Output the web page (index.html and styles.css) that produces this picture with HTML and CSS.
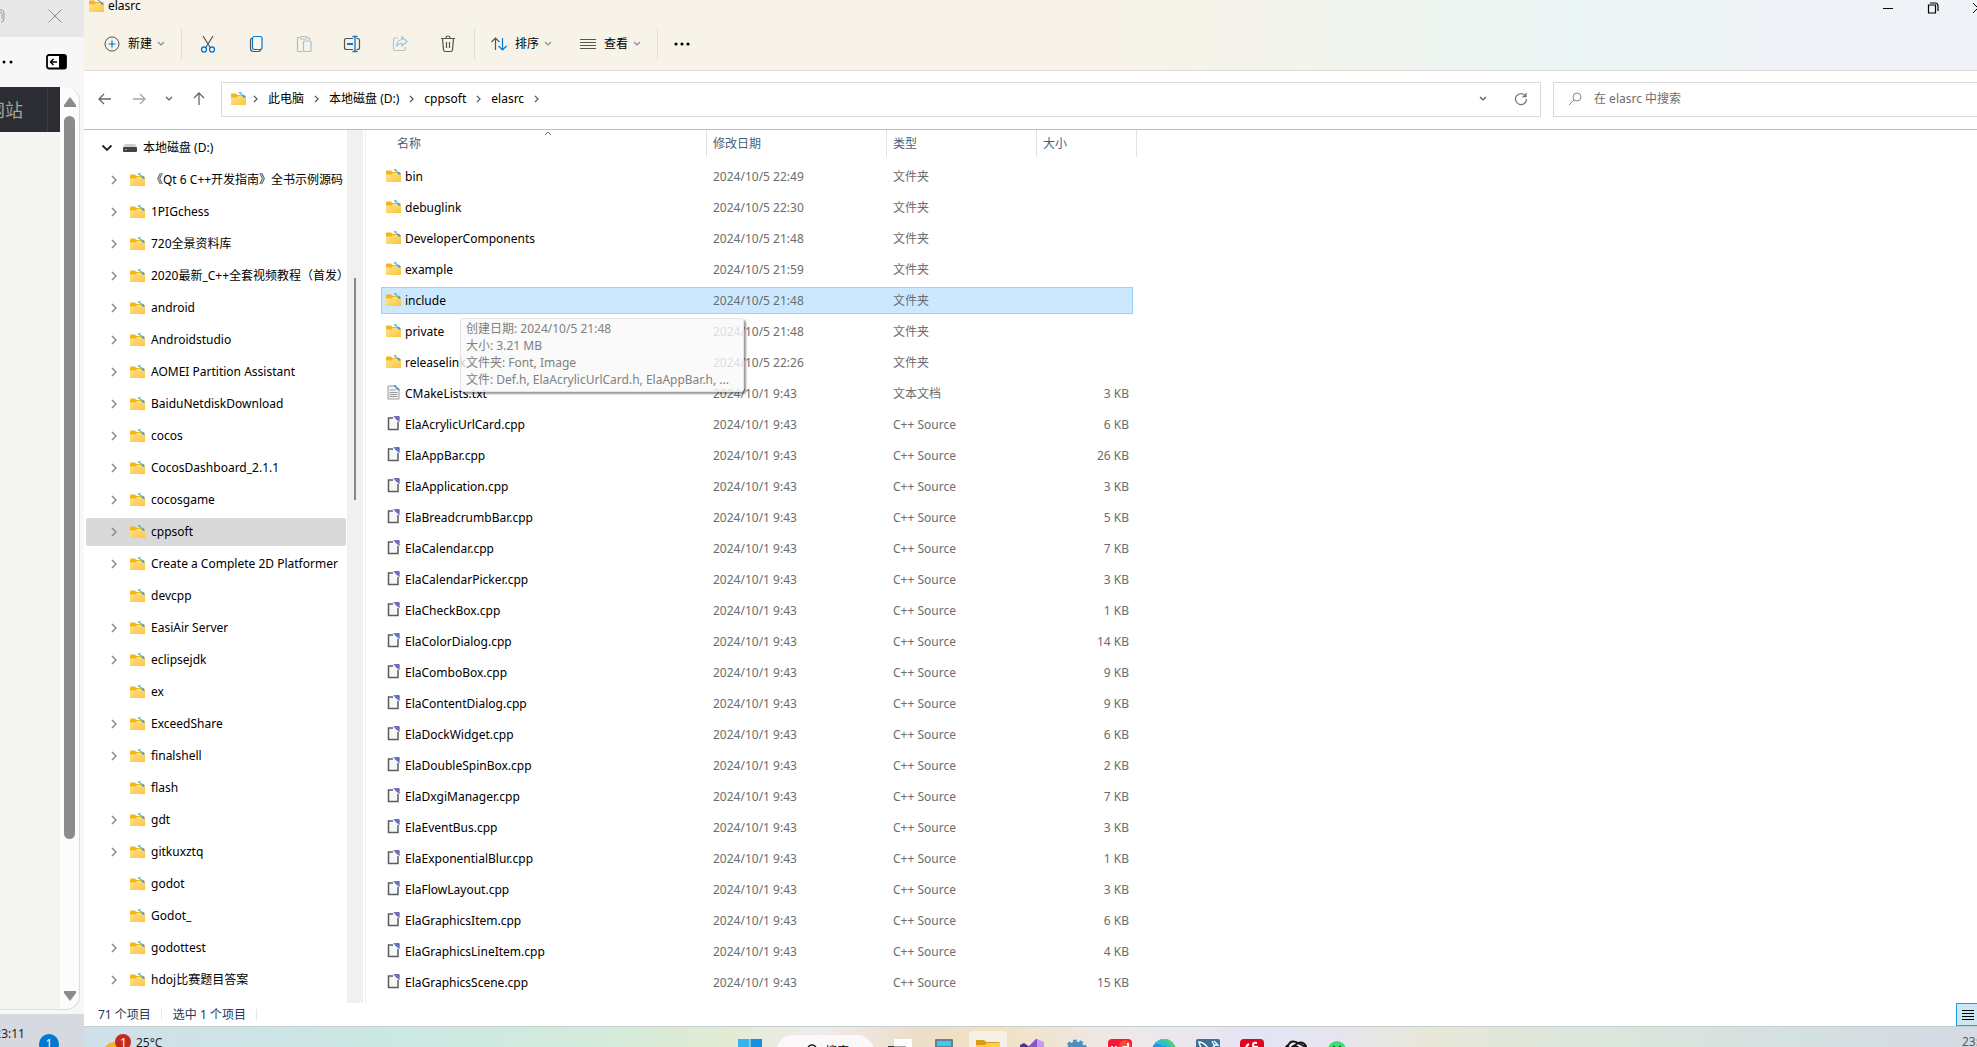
FILE: index.html
```html
<!DOCTYPE html>
<html lang="zh-CN">
  <head>
    <meta charset="UTF-8" />
    <meta name="viewport" content="width=device-width, initial-scale=1.0" />
    <title>elasrc</title>
    <link rel="stylesheet" href="styles.css">
  </head>
  <body>
    <!-- shared icons -->
    <svg class="sprite" aria-hidden="true">
      <defs>
        <linearGradient id="folder-fill" x1="0" y1="0" x2="1" y2="1">
          <stop offset="0" stop-color="#ffe59a" />
          <stop offset="1" stop-color="#fcc433" />
        </linearGradient>
      </defs>
      <symbol id="folder" viewBox="0 0 15 14">
        <path d="M0 2.500Q0 1.500 .6 1.500H5L6.500 3H14V7H0z" fill="#f7b416" />
        <path d="M0 5.500h5.500L7 4h7.400q.6 0 .6.6V12.500q0 .6-.6.6H.6q-.6 0-.6-.6z" fill="url(#folder-fill)" />
        <path d="M8 0l3 .2-1 1 4.800 3-.3 1.400-2.500-.2 1-1-4.800-2.800z" fill="#5fb4e5" />
        <path d="M11.500 3l2.800 2.400-2.300-.3z" fill="#2b7ea8" />
      </symbol>
      <symbol id="cpp" viewBox="0 0 14 15">
        <path d="M6.500 2H2v11.500h9.500V6" fill="#f7f7f9" stroke="#5c5c5c" stroke-width="1.500" />
        <path d="M6.500 0h3l1 2 3.500 3-1.500 1-4-3.500z" fill="#48a5dd" />
        <path d="M9 0h4v4.500h-1.500L9 2.500z" fill="#8a5fb5" />
        <path d="M11 1l2 .5v2z" fill="#4a6fb8" />
      </symbol>
      <symbol id="txt" viewBox="0 0 14 15">
        <path d="M1.500 1H9l3.500 3.500V14h-11z" fill="#f4f4f4" stroke="#999" />
        <path d="M3 5h6M3 7.500h8M3 9.500h8M3 11.500h8" stroke="#999" />
        <path d="M7 0l3 .3L9.500 1.500 13 4v1.500l-3-1z" fill="#3f9fd0" />
      </symbol>
      <symbol id="right" viewBox="0 0 6 10">
        <path d="M1 1l4 4-4 4" fill="none" stroke="currentColor" stroke-width="1.500" />
      </symbol>
      <symbol id="down" viewBox="0 0 8 6">
        <path d="M1 1l3 3 3-3" fill="none" stroke="currentColor" stroke-width="1.200" />
      </symbol>
    </svg>

    <!-- second monitor -->
    <aside class="browser">
      <div class="browser-tabs">
        <svg class="browser-max" viewBox="0 0 5 14"><path d="M0 1h1q3 0 3 3v6q0 3-3 3M0 3q2 0 2 2v5" fill="none" stroke="#999" /></svg>
        <button type="button" aria-label="关闭浏览器">
          <svg width="14" height="14" viewBox="0 0 14 14"><path d="M.5.5l13 13M13.500.5l-13 13" stroke="#8a8a8a" /></svg>
        </button>
      </div>
      <div class="browser-tools">
        <svg width="14" height="4" viewBox="0 0 14 4"><circle cx="4" cy="2" r="1.500" /><circle cx="11" cy="2" r="1.500" /></svg>
        <button type="button" aria-label="侧边栏">
          <svg width="22" height="16" viewBox="0 0 22 16"><rect x="1" y="1" width="19" height="13.500" rx="2" fill="#fff" stroke="#000" stroke-width="1.800" /><path d="M13 1h6l1 1v12l-1 1h-6z" /><path d="M11 8H5M7.500 5L4.500 8l3 3" fill="none" stroke="#000" stroke-width="1.500" /></svg>
        </button>
      </div>
      <div class="webview">
        <div class="site">
          <div class="site-nav"><span>网站</span></div>
        </div>
        <div class="webview-scroll">
          <svg width="12" height="10" viewBox="0 0 12 10"><path d="M6 0l6 8v2H0V8z" fill="#8b8b8b" /></svg>
          <div class="webview-thumb"></div>
          <svg width="12" height="10" viewBox="0 0 12 10"><path d="M6 10l6-8V0H0v2z" fill="#8b8b8b" /></svg>
        </div>
      </div>
      <div class="browser-taskbar">
        <span>23:11</span>
        <span class="notify">1</span>
      </div>
    </aside>

    <div class="screen">
      <main class="explorer">
        <header class="topbar">
          <div class="titlebar">
            <svg class="folder"><use href="#folder" /></svg>
            <h1>elasrc</h1>
            <div class="window-buttons">
              <button type="button" aria-label="最小化"><svg width="12" height="12" viewBox="0 0 12 12"><path d="M1 6.500h10" stroke="#000" /></svg></button>
              <button type="button" aria-label="还原"><svg width="12" height="12" viewBox="0 0 12 12"><path d="M3 1h5q3 0 3 3v5M1.500 3h7v8h-7z" fill="none" stroke="#000" stroke-width="1.200" /></svg></button>
              <button type="button" aria-label="关闭"><svg width="12" height="12" viewBox="0 0 12 12"><path d="M1 1l10 10M11 1L1 11" stroke="#000" /></svg></button>
            </div>
          </div>
          <div class="toolbar">
            <button type="button" class="tool">
              <svg width="16" height="16" viewBox="0 0 16 16" fill="none"><circle cx="8" cy="8" r="7" stroke="#555" /><path d="M8 4.500v7M4.500 8h7" stroke="#0078d4" stroke-width="1.200" /></svg>
              新建
              <svg class="down"><use href="#down" /></svg>
            </button>
            <span class="divider"></span>
            <div class="tools">
              <button type="button" aria-label="剪切"><svg width="20" height="20" viewBox="0 0 20 20" fill="none"><path d="M5 2l7.500 12M15 2L7.500 14" stroke="#555" stroke-width="1.200" /><circle cx="6" cy="15.500" r="2.500" stroke="#0078d4" stroke-width="1.300" /><circle cx="14" cy="15.500" r="2.500" stroke="#0078d4" stroke-width="1.300" /></svg></button>
              <button type="button" aria-label="复制"><svg width="20" height="20" viewBox="0 0 20 20" fill="none"><path d="M6 4Q4.500 4.500 4.500 6v8.500q0 3 3 3h5q1.500 0 2-1.500" stroke="#555" stroke-width="1.200" /><rect x="6.500" y="2.500" width="9.500" height="13" rx="2" fill="#fff" fill-opacity=".4" stroke="#0078d4" stroke-width="1.200" /></svg></button>
              <button type="button" aria-label="粘贴" disabled><svg width="20" height="20" viewBox="0 0 20 20" fill="none"><path d="M9 17.500H4.500q-1 0-1-1V4.500q0-1 1-1H6M13 3.500h1.500q1 0 1 1V6" stroke="#bdb8ad" stroke-width="1.200" /><rect x="6" y="2.500" width="7" height="2.500" rx="1" stroke="#bdb8ad" /><rect x="9.500" y="7" width="7.500" height="10.500" rx="1" stroke="#93c4e2" stroke-width="1.200" /></svg></button>
              <button type="button" aria-label="重命名"><svg width="20" height="20" viewBox="0 0 20 20" fill="none"><path d="M11 4.500H4.500q-2 0-2 2v7q0 2 2 2H11M14.500 4.500h1q2 0 2 2v7q0 2-2 2h-1" stroke="#555" stroke-width="1.200" /><path d="M5 10h6" stroke="#0078d4" stroke-width="2" /><path d="M10.500 2.500h5M10.500 17.500h5M13 2.500v15" stroke="#0078d4" stroke-width="1.300" /></svg></button>
              <button type="button" aria-label="共享" disabled><svg width="20" height="20" viewBox="0 0 20 20" fill="none"><path d="M8 4H5Q3.500 4 3.500 5.500v9.500q0 1.500 1.500 1.500h9q1.500 0 1.500-1.500v-2" stroke="#c4bfb4" stroke-width="1.200" /><path d="M12 3l5 4.500-5 4.500V9.500q-4 0-5.500 3 .5-6.500 5.500-7z" stroke="#93c4e2" stroke-width="1.200" /></svg></button>
              <button type="button" aria-label="删除"><svg width="20" height="20" viewBox="0 0 20 20" fill="none" stroke="#555" stroke-width="1.200"><path d="M3 4.500h14M8 4q0-2 2-2t2 2M4.500 5l1 11q.2 1.500 1.500 1.500h6q1.300 0 1.500-1.500l1-11M8.500 8v6M11.500 8v6" /></svg></button>
            </div>
            <span class="divider"></span>
            <div class="tools">
              <button type="button" class="tool">
                <svg width="16" height="16" viewBox="0 0 16 16" fill="none" stroke-width="1.200"><path d="M4.500 14V2M.5 6l4-4 4 4" stroke="#555" /><path d="M11.500 2v12M7.500 10l4 4 4-4" stroke="#0078d4" /></svg>
                排序
                <svg class="down"><use href="#down" /></svg>
              </button>
              <button type="button" class="tool">
                <svg width="16" height="16" viewBox="0 0 16 16"><path d="M0 3.500h16M0 6.500h16M0 9.500h16M0 12.500h16" stroke="#555" /></svg>
                查看
                <svg class="down"><use href="#down" /></svg>
              </button>
            </div>
            <span class="divider"></span>
            <button type="button" aria-label="更多"><svg width="16" height="4" viewBox="0 0 16 4"><circle cx="2" cy="2" r="1.600" /><circle cx="8" cy="2" r="1.600" /><circle cx="14" cy="2" r="1.600" /></svg></button>
          </div>
        </header>

        <div class="navbar">
          <div class="history">
            <button type="button" aria-label="后退"><svg width="16" height="16" viewBox="0 0 16 16" fill="none"><path d="M14 8H2M7 3L2 8l5 5" stroke="#666" stroke-width="1.300" /></svg></button>
            <button type="button" aria-label="前进"><svg width="16" height="16" viewBox="0 0 16 16" fill="none"><path d="M2 8h12M9 3l5 5-5 5" stroke="#a6a6a6" stroke-width="1.300" /></svg></button>
            <button type="button" aria-label="最近位置"><svg class="down dark"><use href="#down" /></svg></button>
            <button type="button" aria-label="向上"><svg width="16" height="16" viewBox="0 0 16 16" fill="none"><path d="M8 14V2M3 7l5-5 5 5" stroke="#666" stroke-width="1.300" /></svg></button>
          </div>
          <nav class="address">
            <svg class="folder"><use href="#folder" /></svg>
            <svg class="crumb"><use href="#right" /></svg>
            <a href="#">此电脑</a>
            <svg class="crumb"><use href="#right" /></svg>
            <a href="#">本地磁盘 (D:)</a>
            <svg class="crumb"><use href="#right" /></svg>
            <a href="#">cppsoft</a>
            <svg class="crumb"><use href="#right" /></svg>
            <a href="#">elasrc</a>
            <svg class="crumb"><use href="#right" /></svg>
            <div class="address-buttons">
              <button type="button" aria-label="历史记录"><svg class="down dark"><use href="#down" /></svg></button>
              <button type="button" aria-label="刷新"><svg width="16" height="16" viewBox="0 0 16 16" fill="none"><path d="M12.500 5A5.500 5.500 0 1 0 13.500 8M13 2v3.500H9.500" stroke="#777" stroke-width="1.300" /></svg></button>
            </div>
          </nav>
          <label class="search">
            <svg width="16" height="16" viewBox="0 0 16 16" fill="none"><circle cx="10" cy="6" r="4" stroke="#888" /><path d="M7 9l-5 5" stroke="#888" /></svg>
            <input type="search" placeholder="在 elasrc 中搜索" aria-label="搜索" />
          </label>
        </div>

        <div class="panes">
          <ul class="tree">
            <li class="drive">
              <svg class="open"><use href="#down" /></svg>
              <svg width="14" height="8" viewBox="0 0 14 8"><path d="M2 0h10l2 3H0z" fill="#d0d0d0" /><rect y="3" width="14" height="5" rx="1" fill="#444" /><path d="M2 5.500h2" stroke="#49c46b" /></svg>
              本地磁盘 (D:)
            </li>
            <li><svg class="twisty"><use href="#right" /></svg><svg class="folder"><use href="#folder" /></svg>《Qt 6 C++开发指南》全书示例源码</li>
            <li><svg class="twisty"><use href="#right" /></svg><svg class="folder"><use href="#folder" /></svg>1PIGchess</li>
            <li><svg class="twisty"><use href="#right" /></svg><svg class="folder"><use href="#folder" /></svg>720全景资料库</li>
            <li><svg class="twisty"><use href="#right" /></svg><svg class="folder"><use href="#folder" /></svg>2020最新_C++全套视频教程（首发）</li>
            <li><svg class="twisty"><use href="#right" /></svg><svg class="folder"><use href="#folder" /></svg>android</li>
            <li><svg class="twisty"><use href="#right" /></svg><svg class="folder"><use href="#folder" /></svg>Androidstudio</li>
            <li><svg class="twisty"><use href="#right" /></svg><svg class="folder"><use href="#folder" /></svg>AOMEI Partition Assistant</li>
            <li><svg class="twisty"><use href="#right" /></svg><svg class="folder"><use href="#folder" /></svg>BaiduNetdiskDownload</li>
            <li><svg class="twisty"><use href="#right" /></svg><svg class="folder"><use href="#folder" /></svg>cocos</li>
            <li><svg class="twisty"><use href="#right" /></svg><svg class="folder"><use href="#folder" /></svg>CocosDashboard_2.1.1</li>
            <li><svg class="twisty"><use href="#right" /></svg><svg class="folder"><use href="#folder" /></svg>cocosgame</li>
            <li class="current"><svg class="twisty"><use href="#right" /></svg><svg class="folder"><use href="#folder" /></svg>cppsoft</li>
            <li><svg class="twisty"><use href="#right" /></svg><svg class="folder"><use href="#folder" /></svg>Create a Complete 2D Platformer</li>
            <li class="leaf"><svg class="folder"><use href="#folder" /></svg>devcpp</li>
            <li><svg class="twisty"><use href="#right" /></svg><svg class="folder"><use href="#folder" /></svg>EasiAir Server</li>
            <li><svg class="twisty"><use href="#right" /></svg><svg class="folder"><use href="#folder" /></svg>eclipsejdk</li>
            <li class="leaf"><svg class="folder"><use href="#folder" /></svg>ex</li>
            <li><svg class="twisty"><use href="#right" /></svg><svg class="folder"><use href="#folder" /></svg>ExceedShare</li>
            <li><svg class="twisty"><use href="#right" /></svg><svg class="folder"><use href="#folder" /></svg>finalshell</li>
            <li class="leaf"><svg class="folder"><use href="#folder" /></svg>flash</li>
            <li><svg class="twisty"><use href="#right" /></svg><svg class="folder"><use href="#folder" /></svg>gdt</li>
            <li><svg class="twisty"><use href="#right" /></svg><svg class="folder"><use href="#folder" /></svg>gitkuxztq</li>
            <li class="leaf"><svg class="folder"><use href="#folder" /></svg>godot</li>
            <li class="leaf"><svg class="folder"><use href="#folder" /></svg>Godot_</li>
            <li><svg class="twisty"><use href="#right" /></svg><svg class="folder"><use href="#folder" /></svg>godottest</li>
            <li><svg class="twisty"><use href="#right" /></svg><svg class="folder"><use href="#folder" /></svg>hdoj比赛题目答案</li>
          </ul>
          <div class="tree-scroll"><div class="tree-thumb"></div></div>

          <section class="files">
            <table>
              <thead>
                <tr>
                  <th class="col-name">名称<svg class="sorted" viewBox="0 0 8 6"><path d="M1 5l3-3 3 3" fill="none" stroke="#666" /></svg></th>
                  <th class="col-date">修改日期</th>
                  <th class="col-type">类型</th>
                  <th class="col-size">大小</th>
                </tr>
              </thead>
              <tbody>
                <tr><td><svg class="folder"><use href="#folder" /></svg>bin</td><td>2024/10/5 22:49</td><td>文件夹</td><td></td></tr>
                <tr><td><svg class="folder"><use href="#folder" /></svg>debuglink</td><td>2024/10/5 22:30</td><td>文件夹</td><td></td></tr>
                <tr><td><svg class="folder"><use href="#folder" /></svg>DeveloperComponents</td><td>2024/10/5 21:48</td><td>文件夹</td><td></td></tr>
                <tr><td><svg class="folder"><use href="#folder" /></svg>example</td><td>2024/10/5 21:59</td><td>文件夹</td><td></td></tr>
                <tr class="selected"><td><svg class="folder"><use href="#folder" /></svg>include</td><td>2024/10/5 21:48</td><td>文件夹</td><td></td></tr>
                <tr><td><svg class="folder"><use href="#folder" /></svg>private</td><td>2024/10/5 21:48</td><td>文件夹</td><td></td></tr>
                <tr><td><svg class="folder"><use href="#folder" /></svg>releaselink</td><td>2024/10/5 22:26</td><td>文件夹</td><td></td></tr>
                <tr><td><svg class="file"><use href="#txt" /></svg>CMakeLists.txt</td><td>2024/10/1 9:43</td><td>文本文档</td><td>3 KB</td></tr>
                <tr><td><svg class="file"><use href="#cpp" /></svg>ElaAcrylicUrlCard.cpp</td><td>2024/10/1 9:43</td><td>C++ Source</td><td>6 KB</td></tr>
                <tr><td><svg class="file"><use href="#cpp" /></svg>ElaAppBar.cpp</td><td>2024/10/1 9:43</td><td>C++ Source</td><td>26 KB</td></tr>
                <tr><td><svg class="file"><use href="#cpp" /></svg>ElaApplication.cpp</td><td>2024/10/1 9:43</td><td>C++ Source</td><td>3 KB</td></tr>
                <tr><td><svg class="file"><use href="#cpp" /></svg>ElaBreadcrumbBar.cpp</td><td>2024/10/1 9:43</td><td>C++ Source</td><td>5 KB</td></tr>
                <tr><td><svg class="file"><use href="#cpp" /></svg>ElaCalendar.cpp</td><td>2024/10/1 9:43</td><td>C++ Source</td><td>7 KB</td></tr>
                <tr><td><svg class="file"><use href="#cpp" /></svg>ElaCalendarPicker.cpp</td><td>2024/10/1 9:43</td><td>C++ Source</td><td>3 KB</td></tr>
                <tr><td><svg class="file"><use href="#cpp" /></svg>ElaCheckBox.cpp</td><td>2024/10/1 9:43</td><td>C++ Source</td><td>1 KB</td></tr>
                <tr><td><svg class="file"><use href="#cpp" /></svg>ElaColorDialog.cpp</td><td>2024/10/1 9:43</td><td>C++ Source</td><td>14 KB</td></tr>
                <tr><td><svg class="file"><use href="#cpp" /></svg>ElaComboBox.cpp</td><td>2024/10/1 9:43</td><td>C++ Source</td><td>9 KB</td></tr>
                <tr><td><svg class="file"><use href="#cpp" /></svg>ElaContentDialog.cpp</td><td>2024/10/1 9:43</td><td>C++ Source</td><td>9 KB</td></tr>
                <tr><td><svg class="file"><use href="#cpp" /></svg>ElaDockWidget.cpp</td><td>2024/10/1 9:43</td><td>C++ Source</td><td>6 KB</td></tr>
                <tr><td><svg class="file"><use href="#cpp" /></svg>ElaDoubleSpinBox.cpp</td><td>2024/10/1 9:43</td><td>C++ Source</td><td>2 KB</td></tr>
                <tr><td><svg class="file"><use href="#cpp" /></svg>ElaDxgiManager.cpp</td><td>2024/10/1 9:43</td><td>C++ Source</td><td>7 KB</td></tr>
                <tr><td><svg class="file"><use href="#cpp" /></svg>ElaEventBus.cpp</td><td>2024/10/1 9:43</td><td>C++ Source</td><td>3 KB</td></tr>
                <tr><td><svg class="file"><use href="#cpp" /></svg>ElaExponentialBlur.cpp</td><td>2024/10/1 9:43</td><td>C++ Source</td><td>1 KB</td></tr>
                <tr><td><svg class="file"><use href="#cpp" /></svg>ElaFlowLayout.cpp</td><td>2024/10/1 9:43</td><td>C++ Source</td><td>3 KB</td></tr>
                <tr><td><svg class="file"><use href="#cpp" /></svg>ElaGraphicsItem.cpp</td><td>2024/10/1 9:43</td><td>C++ Source</td><td>6 KB</td></tr>
                <tr><td><svg class="file"><use href="#cpp" /></svg>ElaGraphicsLineItem.cpp</td><td>2024/10/1 9:43</td><td>C++ Source</td><td>4 KB</td></tr>
                <tr><td><svg class="file"><use href="#cpp" /></svg>ElaGraphicsScene.cpp</td><td>2024/10/1 9:43</td><td>C++ Source</td><td>15 KB</td></tr>
              </tbody>
            </table>
            <div class="tooltip" role="tooltip">
              创建日期: 2024/10/5 21:48<br />
              大小: 3.21 MB<br />
              文件夹: Font, Image<br />
              文件: Def.h, ElaAcrylicUrlCard.h, ElaAppBar.h, ...
            </div>
          </section>
        </div>

        <footer class="status">
          <span>71 个项目</span>
          <span>选中 1 个项目</span>
          <button type="button" class="details" aria-label="详细信息"><svg width="12" height="12" viewBox="0 0 12 12"><path d="M0 1.500h12M0 4.500h12M0 7.500h12M0 10.500h12" stroke="#000" /></svg></button>
        </footer>
      </main>

      <div class="taskbar">
        <div class="weather">
          <svg width="32" height="28" viewBox="0 0 32 28"><circle cx="14" cy="22" r="10" fill="#f5b32a" /><circle cx="23" cy="12" r="8" fill="#c42b1c" /></svg>
          <span class="weather-count">1</span>
          <span>25°C</span>
        </div>
        <div class="apps">
          <button type="button" aria-label="开始"><svg width="24" height="24" viewBox="0 0 24 24"><path d="M0 0h11.500v11.500H0zM0 12.500h11.500V24H0z" fill="#35b5f0" /><path d="M12.500 0H24v11.500H12.500zM12.500 12.500H24V24H12.500z" fill="#168fe0" /></svg></button>
          <button type="button" class="find">
            <svg width="14" height="14" viewBox="0 0 14 14" fill="none" stroke="#222" stroke-width="1.600"><circle cx="7" cy="5" r="4" /><path d="M4 8l-3 4" /></svg>
            搜索
          </button>
          <button type="button" aria-label="任务视图"><svg width="24" height="24" viewBox="0 0 24 24"><path d="M0 7h18v12H0z" fill="#3a3737" /><path d="M6 0h18v16H6z" fill="#fff" fill-opacity=".95" /><path d="M6 7h12v9H6z" fill="#a6a4a4" /></svg></button>
          <button type="button" aria-label="计算器"><svg width="24" height="24" viewBox="0 0 24 24"><rect x="3" width="18" height="24" rx="1" fill="#6f7b86" /><path d="M5 2h14v5H5z" fill="#3ccaf5" /><path d="M5 9h4v4H5zM10 9h4v4h-4z" fill="#d5dbe0" /><path d="M15 9h4v4h-4z" fill="#3ccaf5" /></svg></button>
          <button type="button" class="running" aria-label="文件资源管理器"><svg width="24" height="24" viewBox="0 0 24 24"><path d="M0 2q0-1 1-1h7l2 2h13l1 1v3H0z" fill="#dd9c12" /><path d="M0 6h9l2-2h13v18H0z" fill="#ffcf48" /></svg></button>
          <button type="button" aria-label="Visual Studio"><svg width="24" height="24" viewBox="0 0 24 24"><path d="M0 6l4-2 13 9v8L0 10z" fill="#52309b" /><path d="M2 14L16 0h2v11L5 22z" fill="#8453cf" /><path d="M17 0l7 3v18l-7 3z" fill="#c79af7" /></svg></button>
          <button type="button" aria-label="设置"><svg width="24" height="24" viewBox="0 0 24 24"><circle cx="12" cy="12" r="9.500" fill="#4b8fc4" /><circle cx="12" cy="12" r="10" fill="none" stroke="#4b8fc4" stroke-width="3" stroke-dasharray="3.500 2.783" /></svg></button>
          <button type="button" aria-label="有道"><svg width="24" height="24" viewBox="0 0 24 24"><rect width="24" height="24" rx="4" fill="#fb1735" /><circle cx="17" cy="7" r="6" fill="#ff4a32" /><path d="M4 7v3q0 2 2 2t2-2V7v6M20 4v8M20 8h-4q-2 0-2 3" fill="none" stroke="#fff" stroke-width="2" /></svg></button>
          <button type="button" aria-label="Edge"><svg width="24" height="24" viewBox="0 0 24 24"><circle cx="12" cy="12" r="12" fill="#2493dc" /><path d="M4 3q9-7 16 0 4 4 4 9H13q2-6-9-9z" fill="#4fd36b" /><path d="M2 6Q8-1 14 2q5 3 5 8h-7Q9 3 2 6z" fill="#2cc1d3" /><path d="M7 12q2-6 8-4v6z" fill="#154f9c" /></svg></button>
          <button type="button" aria-label="MySQL"><svg width="24" height="24" viewBox="0 0 24 24"><rect width="24" height="24" rx="2" fill="#3d7093" /><path d="M2 3q8 0 11 9M3 3q1 5 4 8M16 2l2 4h4l-4-4M19 6l-4 5" fill="none" stroke="#fff" stroke-width="1.300" /></svg></button>
          <button type="button" aria-label="网易云音乐"><svg width="24" height="24" viewBox="0 0 24 24"><rect width="24" height="24" rx="4" fill="#df0420" /><path d="M17 4q-4-1-4 2l2 7M18 8q-8-1-8 5M9 5q-4 2-3 8" fill="none" stroke="#fff" stroke-width="2" /></svg></button>
          <button type="button" aria-label="ChatGPT"><svg width="24" height="24" viewBox="0 0 24 24" fill="none" stroke="#111" stroke-width="1.800"><path d="M4 15V7q2-6 8-4l6 3q5 3 4 8M8 17V8l6-4q5-2 8 3v3M4 6q-5 4-1 9M8 9l4-2 6 4v6" /></svg></button>
          <button type="button" aria-label="助手"><svg width="24" height="24" viewBox="0 0 24 24"><circle cx="9" cy="11" r="9" fill="#3ddc74" /><circle cx="6" cy="8" r="1.200" fill="#155e30" /><circle cx="12" cy="8" r="1.200" fill="#155e30" /></svg></button>
        </div>
        <span class="clock">23:11</span>
      </div>
    </div>
  </body>
</html>
```
FILE: styles.css
```css
* {
  box-sizing: border-box;
}
body {
  display: flex;
  height: 100vh;
  margin: 0;
  overflow: hidden;
  background-color: #fff;
  font-family: "Noto Sans", "Noto Sans CJK SC", sans-serif;
  font-size: 12px;
  line-height: 16px;
  color: #000;
}
button {
  display: flex;
  align-items: center;
  padding: 0;
  border: none;
  background: none;
  font: inherit;
  color: inherit;
}
svg {
  display: block;
  flex: none;
}
a {
  color: inherit;
  text-decoration: none;
}
.sprite {
  position: absolute;
  width: 0;
  height: 0;
}
.folder {
  width: 15px;
  height: 14px;
}
.file {
  width: 15px;
  height: 15px;
}
.down {
  width: 8px;
  height: 6px;
  color: #8a8a86;
}
.dark {
  color: #555;
}

/* Browser on the left monitor */
.browser {
  display: flex;
  flex-direction: column;
  flex: 0 0 84px;
  overflow: hidden;
  background-color: #f7f7f7;
}
.browser-tabs {
  display: flex;
  align-items: center;
  justify-content: space-between;
  height: 37px;
  padding: 0 22px 6px 0;
  background-color: #e8e8e8;
}
.browser-max {
  width: 5px;
  height: 14px;
}
.browser-tools {
  display: flex;
  align-items: center;
  justify-content: space-between;
  height: 50px;
  padding-right: 16px;
}
.webview {
  display: flex;
  flex: 1;
  margin: 0 4px 4px 0;
  border-right: 1px solid #ddd;
  border-bottom: 1px solid #ddd;
  border-radius: 0 14px 14px 0;
  background-color: #fcfcfc;
}
.site {
  width: 60px;
  background-color: #f5f6f1;
}
.site-nav {
  display: flex;
  align-items: center;
  justify-content: flex-end;
  height: 45px;
  padding-right: 25px;
  border-right: 12px solid #2b2d33;
  background-color: #2b2d33;
  box-shadow: inset -1px 0 #3a3c42;
  font-size: 18px;
  color: #a3a39b;
}
.site-nav span {
  flex: none;
}
.webview-scroll {
  display: flex;
  flex-direction: column;
  align-items: center;
  flex: 1;
  padding: 10px 0 8px;
}
.webview-thumb {
  width: 11px;
  height: 80%;
  margin: 9px 0 auto;
  border-radius: 6px;
  background-color: #8b8b8b;
}
.browser-taskbar {
  display: flex;
  align-items: center;
  justify-content: flex-end;
  gap: 14px;
  height: 33px;
  padding: 6px 25px 0 0;
  background-color: #d7d9e1;
  color: #222;
}
.notify {
  flex: none;
  width: 20px;
  height: 20px;
  margin-top: 20px;
  border-radius: 50%;
  background-color: #0078d4;
  color: #fff;
  line-height: 20px;
  text-align: center;
}

/* Explorer window */
.screen {
  display: flex;
  flex-direction: column;
  flex: 1;
  min-width: 0;
}
.explorer {
  display: flex;
  flex-direction: column;
  flex: 1;
  min-height: 0;
}
.topbar {
  border-bottom: 1px solid #dedcd4;
  background: linear-gradient(90deg, #f7f3e8 0%, #f7f3e8 55%, #ebf5f4 78%, #eff3f7 88%, #eff3f7 100%);
}
.titlebar {
  display: flex;
  align-items: center;
  gap: 4px;
  height: 22px;
  margin-top: -5px;
  padding-left: 5px;
  overflow: hidden;
}
.titlebar h1 {
  margin: 0;
  font-size: 12px;
  font-weight: normal;
}
.window-buttons {
  display: flex;
  gap: 33px;
  margin: 4px -7px 0 auto;
}
.toolbar {
  display: flex;
  align-items: center;
  gap: 16px;
  height: 53px;
  padding-left: 20px;
}
.tools {
  display: flex;
  gap: 28px;
}
.tool {
  gap: 8px;
}
.tool .down {
  margin-left: -3px;
}
.divider {
  width: 1px;
  height: 32px;
  background-color: #e2dfd5;
}
.navbar {
  display: flex;
  align-items: center;
  height: 59px;
  padding-left: 13px;
  border-bottom: 1px solid #bdbdbd;
}
.history {
  display: flex;
  align-items: center;
  gap: 18px;
  padding: 0 14px 3px 0;
}
.address {
  display: flex;
  align-items: center;
  flex: 1;
  gap: 10px;
  height: 35px;
  margin: 0 12px 2px 0;
  padding: 0 11px 1px 9px;
  border: 1px solid #d9d9d9;
}
.address .folder {
  margin-right: -3px;
}
.crumb {
  width: 5px;
  height: 8px;
  color: #555;
}
.address-buttons {
  display: flex;
  align-items: center;
  gap: 26px;
  margin-left: auto;
}
.search {
  display: flex;
  align-items: center;
  gap: 11px;
  width: 424px;
  height: 35px;
  margin-bottom: 2px;
  padding-left: 13px;
  border: 1px solid #d9d9d9;
  border-right: none;
}
.search input {
  flex: 1;
  padding: 0;
  border: none;
  background: none;
  font: inherit;
}
.search input::placeholder {
  color: #6d6d6d;
}

/* Folder tree */
.panes {
  display: flex;
  flex: 1;
  min-height: 0;
}
.tree {
  display: flex;
  flex-direction: column;
  flex: 0 0 262px;
  gap: 4px;
  margin: 0;
  padding: 4px 0 0 2px;
  overflow: hidden;
  list-style: none;
}
.tree li {
  display: flex;
  align-items: center;
  flex: none;
  gap: 6px;
  height: 28px;
  padding-left: 25px;
  border-radius: 2px;
  overflow: hidden;
  white-space: nowrap;
}
.tree .drive {
  padding-left: 15px;
}
.tree .leaf {
  padding-left: 44px;
}
.tree .current {
  background-color: #d9d9d9;
}
.twisty {
  width: 6px;
  height: 10px;
  margin-right: 7px;
  color: #888;
}
.open {
  width: 12px;
  height: 9px;
  margin-right: 4px;
  color: #222;
}
.tree-scroll {
  flex: 0 0 17px;
  padding-top: 148px;
  border-left: 1px solid #fff;
  background-color: #f0f0f0;
}
.tree-thumb {
  width: 2px;
  height: 222px;
  margin: 0 auto;
  background-color: #868686;
}

/* File list */
.files {
  position: relative;
  flex: 1;
  margin-left: 2px;
  padding-left: 15px;
  border-left: 1px solid #f0f0f0;
  overflow: hidden;
}
table {
  width: 752px;
  margin-top: -4px;
  border-spacing: 0 4px;
  table-layout: fixed;
}
.col-name {
  width: 325px;
}
.col-date {
  width: 180px;
}
.col-type {
  width: 150px;
}
th {
  position: relative;
  height: 29px;
  padding: 0 0 2px 7px;
  font-weight: normal;
  text-align: left;
  color: #4c607a;
}
th.col-name {
  padding-left: 16px;
}
th::after {
  content: "";
  position: absolute;
  top: 0;
  right: -1px;
  width: 1px;
  height: 27px;
  background-color: #e2e2e2;
}
th.col-size::after {
  right: -4px;
}
.sorted {
  position: absolute;
  top: 0;
  left: 50%;
  width: 8px;
  height: 6px;
}
td {
  height: 27px;
  padding: 0 0 0 7px;
  border: solid transparent;
  border-width: 1px 0;
  white-space: nowrap;
  color: #6d6d6d;
}
td:first-child {
  padding-left: 4px;
  border-left-width: 1px;
  color: #000;
}
td:last-child {
  padding-right: 3px;
  border-right-width: 1px;
  text-align: right;
}
td .folder,
td .file {
  display: inline-block;
  margin-right: 4px;
  vertical-align: -2px;
}
.selected td {
  border-color: #99d1ff;
  background-color: #cce8ff;
}
.tooltip {
  position: absolute;
  top: 188px;
  left: 94px;
  width: 284px;
  padding: 1px 5px 3px;
  border: 1px solid #e5e5e5;
  border-radius: 3px;
  background-color: rgba(249, 249, 249, 0.8);
  box-shadow: 2px 2px 2px rgba(0, 0, 0, 0.4);
  line-height: 17px;
  color: #808080;
}

.status {
  display: flex;
  align-items: stretch;
  height: 23px;
  padding-left: 14px;
  line-height: 23px;
  color: #1e3957;
}
.status span {
  margin-right: 11px;
  padding-right: 11px;
  background: linear-gradient(#e8e8e8, #e8e8e8) right center / 1px 11px no-repeat;
}
.details {
  width: 21px;
  margin-left: auto;
  padding-left: 5px;
  border: 1px solid #26a0da;
  border-right: none;
  background-color: #cbe8f6;
}

/* Taskbar */
.taskbar {
  display: flex;
  align-items: flex-start;
  flex: 0 0 21px;
  overflow: hidden;
  border-top: 1px solid #c5cfd0;
  background: linear-gradient(90deg, #cfe0ea 0%, #cbe8e2 17%, #d3ebdc 27%, #e2ebd3 34%, #f0eaec 39%, #ecdfc8 44%, #f1e2c3 48%, #eee9ea 55%, #e5e4f4 62%, #e6e5f0 66%, #e8e8d8 71%, #dbe6dc 80%, #d4dfe1 92%, #d5dae4 100%);
}
.weather {
  position: relative;
  display: flex;
  align-items: flex-start;
  gap: 4px;
  padding-left: 16px;
  line-height: 32px;
  color: #222;
}
.weather svg {
  margin-top: 3px;
}
.weather-count {
  position: absolute;
  top: 0;
  left: 36px;
  color: #fff;
}
.apps {
  display: flex;
  gap: 20px;
  margin: 12px auto 0;
}
.apps button {
  align-items: flex-start;
}
.apps .find {
  gap: 6px;
  width: 98px;
  height: 34px;
  margin: -4px -6px 0;
  padding: 9px 0 0 29px;
  border-radius: 17px;
  background-color: #faf8f8;
}
.apps .running {
  margin: -8px -7px 0;
  padding: 8px 7px;
  border-radius: 4px;
  background-color: #f5f1e6;
}
.clock {
  width: 15px;
  margin-left: 34px;
  overflow: hidden;
  line-height: 30px;
  color: #5a5a5a;
}
```
